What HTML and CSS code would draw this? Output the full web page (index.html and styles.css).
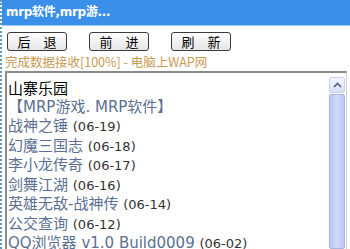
FILE: index.html
```html
<!DOCTYPE html>
<html lang="zh-CN">
<head>
    <meta charset="UTF-8">
    <title>mrp软件,mrp游戏</title>
    <link rel="stylesheet" href="styles.css">
</head>
<body>
    <div class="page">
        <div class="title-bar">mrp软件,mrp游...</div>

        <div class="toolbar">
            <button class="nav-button">后　退</button>
            <button class="nav-button">前　进</button>
            <button class="nav-button">刷　新</button>
        </div>

        <div class="status">完成数据接收[100%] - 电脑上WAP网</div>

        <div class="viewer">
            <div class="content">
                <div class="line heading">山寨乐园</div>
                <div class="line"><a class="link">【MRP游戏. MRP软件】</a></div>
                <div class="line"><a class="link">战神之锤</a> <span class="date">(06-19)</span></div>
                <div class="line"><a class="link">幻魔三国志</a> <span class="date">(06-18)</span></div>
                <div class="line"><a class="link">李小龙传奇</a> <span class="date">(06-17)</span></div>
                <div class="line"><a class="link">剑舞江湖</a> <span class="date">(06-16)</span></div>
                <div class="line"><a class="link">英雄无敌-战神传</a> <span class="date">(06-14)</span></div>
                <div class="line"><a class="link">公交查询</a> <span class="date">(06-12)</span></div>
                <div class="line"><a class="link">QQ浏览器 v1.0 Build0009</a> <span class="date">(06-02)</span></div>
            </div>
            <div class="scrollbar">
                <div class="scroll-arrow">
                    <svg width="9" height="6" viewBox="0 0 9 6"><path d="M1 5 L4.5 1.5 L8 5" fill="none" stroke="#4d6185" stroke-width="1.6"/></svg>
                </div>
                <div class="scroll-thumb"></div>
            </div>
        </div>
    </div>
</body>
</html>
```

FILE: styles.css
```css
body {
    margin: 0;
    background: #ffffff;
    font-family: "DejaVu Sans", "Noto Sans CJK SC", sans-serif;
    overflow: hidden;
}

.page {
    height: 249px;
    border-left: 2px dotted #5a9ec0;
    display: flex;
    flex-direction: column;
}

.title-bar {
    height: 25px;
    line-height: 25px;
    padding-left: 4px;
    background: #3a8fe8;
    border-bottom: 1px solid #9cc8f0;
    color: #ffffff;
    font-size: 12px;
    font-weight: bold;
    letter-spacing: -0.3px;
}

.toolbar {
    display: flex;
    gap: 22px;
    padding: 6px 0 0 5px;
}

.nav-button {
    width: 60px;
    height: 19px;
    padding: 0;
    border: 1px solid #3c3c3c;
    border-radius: 3px;
    background: linear-gradient(#fdfdfd, #e6e6e6);
    font-family: "Noto Sans CJK SC", sans-serif;
    font-size: 13px;
    line-height: 17px;
    color: #000000;
}

.status {
    padding: 3px 0 0 3px;
    height: 17px;
    font-family: "Noto Sans CJK SC", sans-serif;
    font-size: 12.5px;
    line-height: 15px;
    color: #c99a52;
    white-space: nowrap;
}

.viewer {
    flex: 1;
    display: flex;
    margin: 0 3px 0 3px;
    border-top: 2px solid #8a8a8a;
    border-left: 2px solid #8a8a8a;
    border-right: 1px solid #d0d0d0;
    overflow: hidden;
}

.content {
    flex: 1;
    padding: 5px 0 0 1px;
    font-size: 15px;
    line-height: 19.5px;
    white-space: nowrap;
    overflow: hidden;
}

.heading {
    color: #000000;
    font-family: "Noto Sans CJK SC", sans-serif;
}

.link {
    color: #5b6f92;
}

.date {
    font-size: 13px;
    color: #333333;
}

.scrollbar {
    width: 16px;
    display: flex;
    flex-direction: column;
    padding: 4px 1px 0 0;
    gap: 1px;
}

.scroll-arrow {
    height: 14px;
    display: flex;
    align-items: center;
    justify-content: center;
    background: linear-gradient(#f4f7ff, #d8e0f6);
    border: 1px solid #c6d0ea;
    border-radius: 2px;
}

.scroll-thumb {
    flex: 1;
    background: linear-gradient(90deg, #bcc8f2, #cfd9fb 50%, #bac6ef);
    border: 1px solid #a8b6e0;
    border-radius: 2px;
}
```
